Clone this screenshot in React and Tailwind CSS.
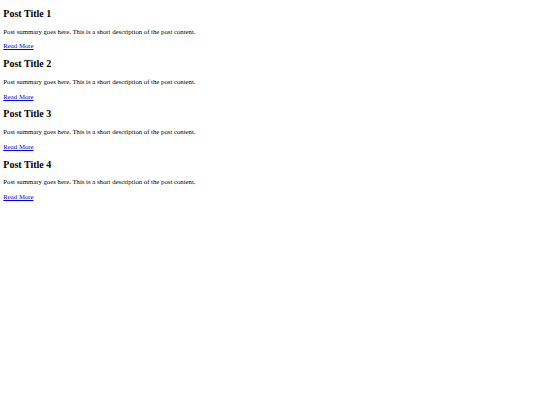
import React from "react";

const posts = [1, 2, 3, 4];

const App = () => {
  return (
    <div className="min-h-screen bg-white px-[3.33px] pt-[8.3px] text-black font-['Liberation_Serif',serif]">
      <div className="flex flex-col gap-[8.3px]">
        {posts.map((n) => (
          <div key={n}>
            <h2 className="text-[10px] leading-[11.5px] font-bold">Post Title {n}</h2>
            <p className="mt-[8.3px] text-[6.75px] leading-[7.67px]">
              Post summary goes here. This is a short description of the post content.
            </p>
            <p className="mt-[6.67px] text-[6.75px] leading-[7.67px]">
              <a href="#" className="text-[#0000ee] underline">
                Read More
              </a>
            </p>
          </div>
        ))}
      </div>
    </div>
  );
};

export default App;
